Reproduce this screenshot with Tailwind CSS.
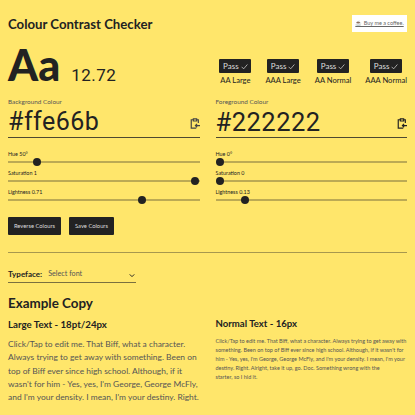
<!DOCTYPE html>
<html lang="en">
<head>
    <meta charset="UTF-8">
    <meta name="viewport" content="width=device-width, initial-scale=1.0">
    <title>Colour Contrast Checker</title>
    <script src="https://cdn.jsdelivr.net/npm/@tailwindcss/browser@4"></script>
</head>
<body class="bg-[#ffe66b] text-[#222222] font-[Lato,sans-serif] h-[415px] overflow-hidden">
    <div class="px-2 pt-[15px]">
        <!-- Header -->
        <div class="flex justify-between items-start h-[33px]">
            <h1 class="text-[13.2px] leading-[16px] mt-[1px] font-bold">Colour Contrast Checker</h1>
            <a class="bg-white h-[17px] w-[55px] flex items-center justify-center text-[5.5px] underline text-[#666] whitespace-nowrap">☕ Buy me a coffee.</a>
        </div>

        <!-- Score and badges -->
        <div class="flex justify-between h-[50px]">
            <div class="flex items-baseline h-[44px] mt-[-4px]">
                <span class="text-[43px] leading-[42px] font-black">Aa</span>
                <span class="text-[17px] leading-[20px] font-[Roboto,sans-serif] ml-[11px] tracking-[0.5px]">12.72</span>
            </div>
            <div class="flex gap-[14px] pt-[11px]">
                <div class="flex flex-col items-center">
                    <span class="bg-[#222222] text-[#ddd] text-[8px] h-[14px] w-[32px] rounded-[1px] flex items-center justify-center gap-[2px]">Pass <svg class="w-[7px] h-[7px]" viewBox="0 0 12 12" fill="none" stroke="#ddd" stroke-width="1.2"><path d="M1 6.5 4.5 10 11 2.5"/></svg></span>
                    <span class="text-[7.6px] leading-[10px] mt-[2px] whitespace-nowrap">AA Large</span>
                </div>
                <div class="flex flex-col items-center">
                    <span class="bg-[#222222] text-[#ddd] text-[8px] h-[14px] w-[32px] rounded-[1px] flex items-center justify-center gap-[2px]">Pass <svg class="w-[7px] h-[7px]" viewBox="0 0 12 12" fill="none" stroke="#ddd" stroke-width="1.2"><path d="M1 6.5 4.5 10 11 2.5"/></svg></span>
                    <span class="text-[7.6px] leading-[10px] mt-[2px] whitespace-nowrap">AAA Large</span>
                </div>
                <div class="flex flex-col items-center">
                    <span class="bg-[#222222] text-[#ddd] text-[8px] h-[14px] w-[32px] rounded-[1px] flex items-center justify-center gap-[2px]">Pass <svg class="w-[7px] h-[7px]" viewBox="0 0 12 12" fill="none" stroke="#ddd" stroke-width="1.2"><path d="M1 6.5 4.5 10 11 2.5"/></svg></span>
                    <span class="text-[7.6px] leading-[10px] mt-[2px] whitespace-nowrap">AA Normal</span>
                </div>
                <div class="flex flex-col items-center">
                    <span class="bg-[#222222] text-[#ddd] text-[8px] h-[14px] w-[32px] rounded-[1px] flex items-center justify-center gap-[2px]">Pass <svg class="w-[7px] h-[7px]" viewBox="0 0 12 12" fill="none" stroke="#ddd" stroke-width="1.2"><path d="M1 6.5 4.5 10 11 2.5"/></svg></span>
                    <span class="text-[7.6px] leading-[10px] mt-[2px] whitespace-nowrap">AAA Normal</span>
                </div>
            </div>
        </div>

        <!-- Colour inputs -->
        <div class="grid grid-cols-2 gap-x-4">
            <div>
                <p class="text-[6.4px] leading-[8px] text-[#555]">Background Colour</p>
                <div class="flex justify-between items-center h-[32px] border-b border-[#222222]/80">
                    <span class="text-[25px] leading-[30px] font-[Roboto,sans-serif] tracking-[0.5px]">#ffe66b</span>
                    <svg class="w-[10px] h-[11px] mt-[4px]" viewBox="0 0 12 13" fill="none" stroke="#444" stroke-width="1.4"><path d="M4 2H1.5v10h6M8.5 2H10v4M4 1h4v2.5H4z"/><path d="M12 9H6.5M8.5 7 6.5 9l2 2" stroke-width="1.4"/></svg>
                </div>
                <div class="mt-[12px] flex flex-col">
                    <div class="h-[19px]">
                        <p class="text-[5.4px] leading-[8px]">Hue 50°</p>
                        <div class="relative h-[1.5px] mt-[3px] bg-[#222222]/30"><span class="absolute top-[-3.5px] w-[8px] h-[8px] rounded-full bg-[#222222]" style="left:25px"></span></div>
                    </div>
                    <div class="h-[19px]">
                        <p class="text-[5.4px] leading-[8px]">Saturation 1</p>
                        <div class="relative h-[1.5px] mt-[3px] bg-[#222222]/30"><span class="absolute top-[-3.5px] w-[8px] h-[8px] rounded-full bg-[#222222]" style="left:183px"></span></div>
                    </div>
                    <div class="h-[19px]">
                        <p class="text-[5.4px] leading-[8px]">Lightness 0.71</p>
                        <div class="relative h-[1.5px] mt-[3px] bg-[#222222]/30"><span class="absolute top-[-3.5px] w-[8px] h-[8px] rounded-full bg-[#222222]" style="left:130px"></span></div>
                    </div>
                </div>
            </div>
            <div>
                <p class="text-[6.4px] leading-[8px] text-[#555]">Foreground Colour</p>
                <div class="flex justify-between items-center h-[32px] border-b border-[#222222]/80">
                    <span class="text-[25.5px] leading-[30px] font-[Roboto,sans-serif] tracking-[0.5px]">#222222</span>
                    <svg class="w-[10px] h-[11px] mt-[4px]" viewBox="0 0 12 13" fill="none" stroke="#222" stroke-width="1.4"><path d="M4 2H1.5v10h6M8.5 2H10v4M4 1h4v2.5H4z"/><path d="M12 9H6.5M8.5 7 6.5 9l2 2" stroke-width="1.4"/></svg>
                </div>
                <div class="mt-[12px] flex flex-col">
                    <div class="h-[19px]">
                        <p class="text-[5.4px] leading-[8px]">Hue 0°</p>
                        <div class="relative h-[1.5px] mt-[3px] bg-[#222222]/30"><span class="absolute top-[-3.5px] w-[8px] h-[8px] rounded-full bg-[#222222]" style="left:0px"></span></div>
                    </div>
                    <div class="h-[19px]">
                        <p class="text-[5.4px] leading-[8px]">Saturation 0</p>
                        <div class="relative h-[1.5px] mt-[3px] bg-[#222222]/30"><span class="absolute top-[-3.5px] w-[8px] h-[8px] rounded-full bg-[#222222]" style="left:0px"></span></div>
                    </div>
                    <div class="h-[19px]">
                        <p class="text-[5.4px] leading-[8px]">Lightness 0.13</p>
                        <div class="relative h-[1.5px] mt-[3px] bg-[#222222]/30"><span class="absolute top-[-3.5px] w-[8px] h-[8px] rounded-full bg-[#222222]" style="left:25px"></span></div>
                    </div>
                </div>
            </div>
        </div>

        <!-- Buttons -->
        <div class="flex gap-2 mt-[10px]">
            <button class="bg-[#222222] text-[#ddd] text-[5.8px] h-[18px] w-[53px] rounded-[1px]">Reverse Colours</button>
            <button class="bg-[#222222] text-[#ddd] text-[5.8px] h-[18px] w-[45px] rounded-[1px]">Save Colours</button>
        </div>
        <hr class="mt-[17px] border-t border-[#222222]/40">

        <!-- Typeface -->
        <div class="flex items-end w-[128px] h-[22px] mt-[8px] border-b border-[#222222]/60 pb-[2px]">
            <span class="text-[8px] font-bold">Typeface:</span>
            <span class="text-[7.2px] text-[#555] ml-[6px] grow">Select font</span>
            <svg class="w-[6px] h-[5px] mr-[1px] mb-[2px]" viewBox="0 0 8 6" fill="none" stroke="#222" stroke-width="1.3"><path d="M1 1.5 4 4.5 7 1.5"/></svg>
        </div>

        <!-- Example copy -->
        <h2 class="text-[13.4px] leading-[20px] font-bold mt-[10px]">Example Copy</h2>
        <div class="grid grid-cols-2 gap-x-4 mt-[4px]">
            <div>
                <h3 class="text-[9.7px] leading-[14px] font-bold">Large Text - 18pt/24px</h3>
                <p class="text-[8.44px] leading-[13.3px] text-[#555] mt-[7px]">Click/Tap to edit me. That Biff, what a character. Always trying to get away with something. Been on top of Biff ever since high school. Although, if it wasn't for him - Yes, yes, I'm George, George McFly, and I'm your density. I mean, I'm your destiny. Right.</p>
            </div>
            <div>
                <h3 class="text-[9.6px] leading-[14px] font-bold">Normal Text - 16px</h3>
                <p class="text-[5.5px] leading-[9px] text-[#555] mt-[6px]">Click/Tap to edit me. That Biff, what a character. Always trying to get away with something. Been on top of Biff ever since high school. Although, if it wasn't for him - Yes, yes, I'm George, George McFly, and I'm your density. I mean, I'm your destiny. Right. Alright, take it up, go. Doc. Something wrong with the<br>starter, so I hid it.</p>
            </div>
        </div>
    </div>
</body>
</html>
